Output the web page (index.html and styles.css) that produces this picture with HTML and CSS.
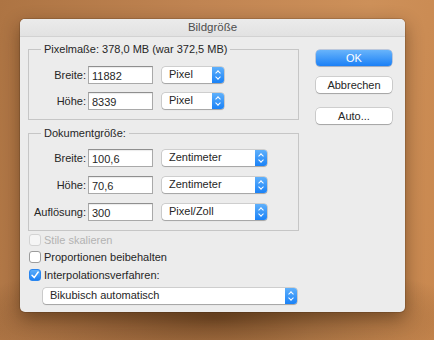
FILE: index.html
```html
<!DOCTYPE html>
<html lang="de">
<head>
    <meta charset="UTF-8">
    <title>Bildgröße</title>
    <link rel="stylesheet" href="styles.css">
</head>
<body>
    <div class="dialog">
        <div class="titlebar">Bildgröße</div>
        <div class="content">
            <div class="main">
                <fieldset class="group group-pixel">
                    <legend>Pixelmaße: 378,0 MB (war 372,5 MB)</legend>
                    <div class="row">
                        <label>Breite:</label>
                        <input type="text" class="field" value="11882">
                        <div class="popup short"><span>Pixel</span><i class="arrows"></i></div>
                    </div>
                    <div class="row">
                        <label>Höhe:</label>
                        <input type="text" class="field" value="8339">
                        <div class="popup short"><span>Pixel</span><i class="arrows"></i></div>
                    </div>
                </fieldset>

                <fieldset class="group group-doc">
                    <legend>Dokumentgröße:</legend>
                    <div class="row">
                        <label>Breite:</label>
                        <input type="text" class="field" value="100,6">
                        <div class="popup"><span>Zentimeter</span><i class="arrows"></i></div>
                    </div>
                    <div class="row">
                        <label>Höhe:</label>
                        <input type="text" class="field" value="70,6">
                        <div class="popup"><span>Zentimeter</span><i class="arrows"></i></div>
                    </div>
                    <div class="row">
                        <label>Auflösung:</label>
                        <input type="text" class="field" value="300">
                        <div class="popup"><span>Pixel/Zoll</span><i class="arrows"></i></div>
                    </div>
                </fieldset>

                <div class="checks">
                    <div class="check disabled"><span class="box"></span>Stile skalieren</div>
                    <div class="check"><span class="box"></span>Proportionen beibehalten</div>
                    <div class="check"><span class="box checked">
                        <svg width="10" height="10" viewBox="0 0 10 10"><path d="M2 5.2 L4.2 7.6 L8.2 2" fill="none" stroke="#fff" stroke-width="1.5" stroke-linecap="round" stroke-linejoin="round"/></svg>
                    </span>Interpolationsverfahren:</div>
                </div>

                <div class="popup wide"><span>Bikubisch automatisch</span><i class="arrows"></i></div>
            </div>

            <div class="buttons">
                <button class="btn primary">OK</button>
                <button class="btn">Abbrechen</button>
                <button class="btn auto">Auto...</button>
            </div>
        </div>
    </div>
</body>
</html>
```

FILE: styles.css
```css
html, body {
    margin: 0;
    height: 100%;
}

body {
    width: 434px;
    height: 340px;
    overflow: hidden;
    font-family: "Liberation Sans", Arial, sans-serif;
    font-size: 11px;
    color: #262626;
    background:
        radial-gradient(ellipse 260px 60px at 215px 318px, rgba(60,30,5,0.55), rgba(60,30,5,0) 100%),
        linear-gradient(100deg, #ad7443 0%, #c08452 40%, #cd9059 75%, #c9884f 100%);
    padding-top: 19px;
    box-sizing: border-box;
}

.dialog {
    margin-left: 20px;
    width: 385px;
    height: 293px;
    background-color: #ececec;
    border-radius: 5px;
    box-shadow: 0 6px 18px rgba(40,20,0,0.45), 0 0 0 1px rgba(0,0,0,0.12);
    overflow: hidden;
}

.titlebar {
    height: 17px;
    line-height: 17px;
    text-align: center;
    font-size: 11.5px;
    color: #4d4d4d;
    background: linear-gradient(#ebebeb, #e2e2e2);
    border-bottom: 1px solid #d2d2d2;
}

.content {
    display: flex;
    padding: 6px 0 0 8px;
}

.main {
    width: 271px;
}

.group {
    margin: 0;
    padding: 0 0 9px 0;
    border: 1px solid #c6c6c6;
    border-radius: 0;
}

.group legend {
    margin-left: 12px;
    padding: 0 3px;
    line-height: 13px;
}

.group-pixel .row {
    margin-top: 8px;
}

.group-pixel .row:first-of-type {
    margin-top: 10px;
}

.group-doc {
    margin-top: 7px;
    padding-bottom: 9px;
}

.group-doc .row {
    margin-top: 9px;
}

.row {
    display: flex;
    align-items: center;
}

.row label {
    width: 57px;
    text-align: right;
    margin-right: 2px;
}

.field {
    box-sizing: border-box;
    width: 65px;
    height: 18px;
    margin: 0 9px 0 0;
    padding: 1px 3px 0;
    border: 1px solid #a9a9a9;
    border-top-color: #8f8f8f;
    background: #fff;
    font: inherit;
    color: #262626;
    box-shadow: inset 0 1px 1px rgba(0,0,0,0.08);
}

.popup {
    position: relative;
    box-sizing: border-box;
    width: 105px;
    height: 16px;
    line-height: 15px;
    padding-left: 7px;
    background: #fff;
    border-radius: 3px;
    box-shadow: 0 0 0 0.5px rgba(0,0,0,0.25), 0 1px 1px rgba(0,0,0,0.2);
}

.popup.short {
    width: 62px;
}

.popup.wide {
    width: 254px;
    margin: 4px 0 0 15px;
}

.arrows {
    position: absolute;
    right: 0;
    top: 0;
    width: 12px;
    height: 16px;
    border-radius: 0 3px 3px 0;
    background: linear-gradient(#5fb0fb, #1a82f7);
}

.arrows::before,
.arrows::after {
    content: "";
    position: absolute;
    left: 4px;
    width: 3px;
    height: 3px;
    border: solid #fff;
    border-width: 1px 0 0 1px;
    transform: rotate(45deg);
}

.arrows::before {
    top: 4px;
}

.arrows::after {
    top: 8px;
    transform: rotate(225deg);
}

.checks {
    margin-top: 0;
}

.check {
    display: flex;
    align-items: center;
    height: 17.5px;
    padding-left: 1px;
}

.check .box {
    box-sizing: border-box;
    width: 12px;
    height: 12px;
    margin-right: 3px;
    border: 1px solid #9c9c9c;
    border-radius: 3px;
    background: #fff;
    display: flex;
    align-items: center;
    justify-content: center;
}

.check .box.checked {
    border-color: #2a86ef;
    background: linear-gradient(#5daefa, #1b80f5);
}

.check.disabled {
    color: #b3b3b3;
}

.check.disabled .box {
    border-color: #d3d3d3;
    background: #f5f5f5;
}

.buttons {
    display: flex;
    flex-direction: column;
    margin-left: 17px;
    padding-top: 7px;
}

.btn {
    width: 76px;
    height: 16px;
    padding: 0;
    margin-bottom: 11px;
    font: inherit;
    color: #262626;
    background: #fff;
    border: none;
    border-radius: 4px;
    box-shadow: 0 0 0 0.5px rgba(0,0,0,0.25), 0 1px 1px rgba(0,0,0,0.2);
}

.btn.primary {
    color: #fff;
    background: linear-gradient(#68b4fb, #1b80f6);
    box-shadow: 0 0 0 0.5px rgba(0,60,160,0.4), 0 1px 1px rgba(0,0,0,0.15);
}

.btn.auto {
    margin-top: 4px;
}
```
